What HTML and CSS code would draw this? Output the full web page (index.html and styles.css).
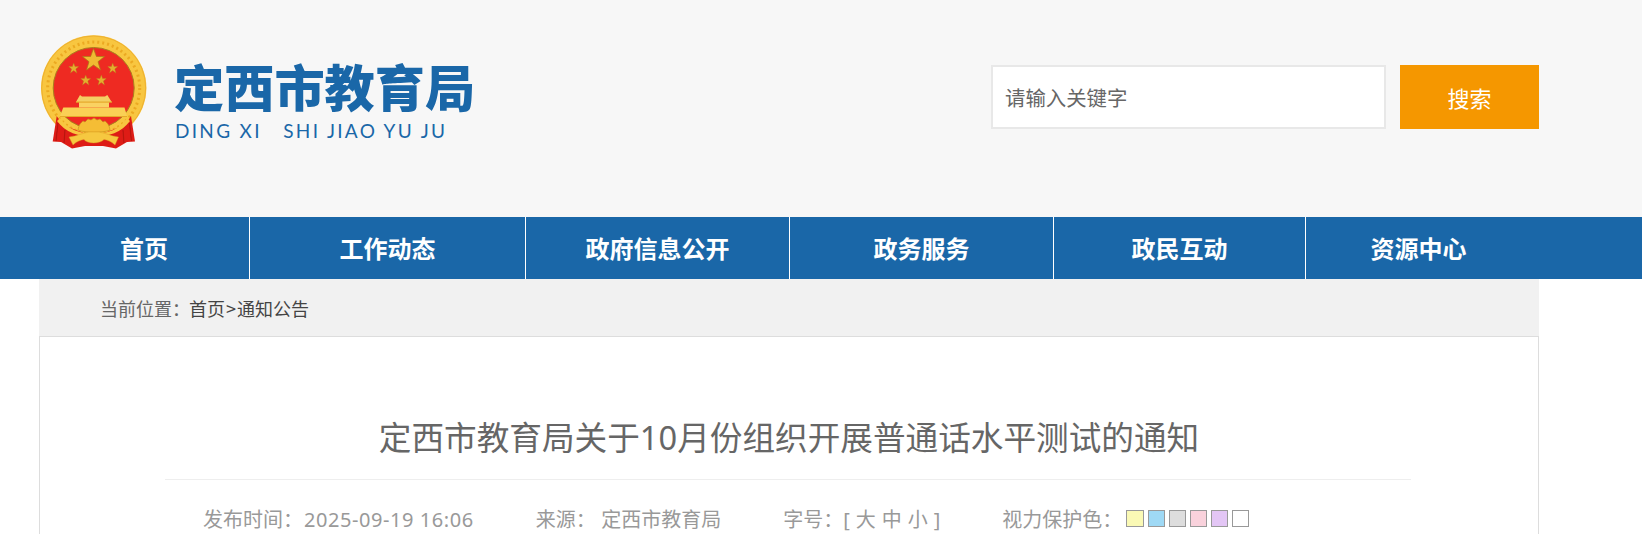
FILE: index.html
```html
<!DOCTYPE html>
<html lang="zh-CN">
<head>
<meta charset="utf-8">
<title>定西市教育局</title>
<link rel="stylesheet" href="styles.css">
</head>
<body>
<header class="header">
  <div class="header-inner">
    <div class="brand">
      <svg class="emblem" width="110" height="118" viewBox="0 0 110 118" aria-hidden="true">
        <defs><filter id="soft" x="-5%" y="-5%" width="110%" height="110%"><feGaussianBlur stdDeviation=".35"/></filter></defs>
        <g filter="url(#soft)">
          <circle cx="54.700" cy="55" r="52.700" fill="#f8c63f"/>
          <circle cx="54.700" cy="55" r="52" fill="none" stroke="#eeb030" stroke-width="1"/>
          <circle cx="54.700" cy="55" r="46" fill="none" stroke="#eba922" stroke-width="3" stroke-dasharray="2 3"/>
          <circle cx="54.700" cy="55" r="40.500" fill="#ee2c22" stroke="#a97f1e" stroke-width="1"/>
          <path d="M17.700 83 L13.700 108.500 L22 109 L33 115.500 L46 113 H64 L77 115.500 L88 109 L96 108.500 L92 83 L86 92 L55 104 L24 92 Z" fill="#de1f16"/>
          <path d="M19 90 L17 108 M26 97 L25 110 M90.500 90 L92.500 108 M84 97 L85 110" stroke="#b81510" stroke-width="1.200" fill="none"/>
          <path d="M54.500 15.500 L57.400 23.500 L65.500 23.500 L59 28.700 L61.500 37 L54.500 32 L47.500 37 L50 28.700 L43.500 23.500 L51.600 23.500 Z" fill="#f0bb33" stroke="#a97a18" stroke-width=".7"/>
          <path d="M34.700 30 L36 33.600 L39.800 33.600 L36.800 36 L37.900 40 L34.700 37.600 L31.500 40 L32.600 36 L29.600 33.600 L33.400 33.600 Z" fill="#e4ae2f" stroke="#a97a18" stroke-width=".3"/>
          <path d="M73.700 30 L75 33.600 L78.800 33.600 L75.800 36 L76.900 40 L73.700 37.600 L70.500 40 L71.600 36 L68.600 33.600 L72.400 33.600 Z" fill="#e4ae2f" stroke="#a97a18" stroke-width=".3"/>
          <path d="M46.700 42 L48 45.600 L51.800 45.600 L48.800 48 L49.900 52 L46.700 49.600 L43.500 52 L44.600 48 L41.600 45.600 L45.400 45.600 Z" fill="#e4ae2f" stroke="#a97a18" stroke-width=".3"/>
          <path d="M62.300 42 L63.600 45.600 L67.400 45.600 L64.400 48 L65.500 52 L62.300 49.600 L59.100 52 L60.200 48 L57.200 45.600 L61 45.600 Z" fill="#e4ae2f" stroke="#a97a18" stroke-width=".3"/>
          <path d="M41 62 L43 63.500 H66 L68.300 62 L72.700 69 H37 Z" fill="#f4cf63"/>
          <rect x="40" y="69" width="30" height="5.500" fill="#fad262"/>
          <rect x="37" y="68.500" width="36" height="1.200" fill="#e5a92c"/>
          <path d="M24.300 74.500 H85.500 L88 83 H21 Z" fill="#fad054"/>
          <path d="M21 83 H88 V84 H21 Z" fill="#e5a92c"/>
          <path d="M21 85 C28 96 42 101 54.700 101 C68 101 81 96 88 85 L91 88 C83 99 69 104 54.700 104 C40 104 26 99 18 88 Z" fill="#f8c63f"/>
          <path d="M39 97 C40 91 42 90 44 88 L46 89 L49 86 L52 87 L55 85 L58 87 L61 86 L64 89 L66 88 C68 90 70 91 71 97 C64 100 46 100 39 97 Z" fill="#f5bd34" stroke="#c48d1c" stroke-width=".6"/>
          <path d="M30 104 C38 103 44 100 50 99 H60 C66 100 72 103 79.500 104 L76 112 C72 108 68 107 65 106.500 C61 111 48 111 45 106.500 C42 107 38 108 34 112 Z" fill="#f6c840" stroke="#d89b22" stroke-width=".4"/>
        </g>
      </svg>
      <div class="brand-text">
        <div class="brand-name">定西市教育局</div>
        <div class="brand-pinyin">DING XI&nbsp;&nbsp; SHI JIAO YU JU</div>
      </div>
    </div>
    <form class="search">
      <input class="search-input" type="text" placeholder="请输入关键字">
      <button class="search-btn" type="button">搜索</button>
    </form>
  </div>
</header>
<nav class="nav">
  <ul class="nav-list">
    <li class="nav-item">首页</li>
    <li class="nav-item">工作动态</li>
    <li class="nav-item">政府信息公开</li>
    <li class="nav-item">政务服务</li>
    <li class="nav-item">政民互动</li>
    <li class="nav-item">资源中心</li>
  </ul>
</nav>
<main class="main">
  <div class="crumb"><span class="crumb-label">当前位置：</span>首页<span class="crumb-sep">&gt;</span>通知公告</div>
  <article class="article">
    <h1 class="article-title">定西市教育局关于10月份组织开展普通话水平测试的通知</h1>
    <div class="meta">
      <span class="meta-item">发布时间：<span class="meta-date">2025-09-19 16:06</span></span>
      <span class="meta-item meta-source"><span>来源：</span><span>定西市教育局</span></span>
      <span class="meta-item meta-size">字号：[ 大 中 小 ]</span>
      <span class="meta-item">视力保护色：
        <span class="swatches">
          <i class="swatch sw-yellow"></i><i class="swatch sw-blue"></i><i class="swatch sw-gray"></i><i class="swatch sw-pink"></i><i class="swatch sw-purple"></i><i class="swatch sw-white"></i>
        </span>
      </span>
    </div>
  </article>
</main>
</body>
</html>
```
FILE: styles.css
```css
* { box-sizing: border-box; }
html, body { margin: 0; padding: 0; height: 534px; overflow: hidden; background: #fff; }
body { font-family: "Noto Sans", "Noto Sans CJK SC", sans-serif; color: #666; }

.header { height: 217px; background: #f7f7f7; }
.header-inner { width: 1500px; margin-left: 39px; display: flex; justify-content: space-between; }
.brand { display: flex; padding-top: 33px; }
.emblem { display: block; flex: none; }
.brand-text { margin-left: 25px; padding-top: 20px; }
.brand-name { font-size: 50.200px; line-height: 64px; font-weight: 900; color: #1a67a8; font-family: "Noto Sans CJK SC", sans-serif; white-space: nowrap; }
.brand-pinyin { font-family: Lato, sans-serif; font-size: 19px; line-height: 24px; letter-spacing: 2.300px; color: #1a67a8; margin: 2px 0 0 1px; white-space: nowrap; }

.search { display: flex; gap: 14px; padding-top: 65px; }
.search-input { width: 395px; height: 64px; border: 2px solid #e8e8e8; background: #fff; padding: 0 12px; font: 20.400px "Noto Sans CJK SC", sans-serif; color: #666; outline: none; }
.search-input::placeholder { color: #666; opacity: 1; }
.search-btn { width: 139px; height: 64px; border: 0; background: #f59700; color: #fff; font: 22px "Noto Sans CJK SC", sans-serif; padding: 0; }

.nav { height: 62px; background: #1a67a8; }
.nav-list { list-style: none; margin: 0 0 0 39px; padding: 0; height: 62px; display: grid; grid-template-columns: 211px 276px 264px 264px 252px 225px; }
.nav-item { display: flex; align-items: center; justify-content: center; padding-bottom: 2px; color: #fff; font: 700 24px "Noto Sans CJK SC", sans-serif; border-right: 1px solid #fff; }
.nav-item:last-child { border-right: 0; }

.main { width: 1500px; margin-left: 39px; }
.crumb { height: 57px; background: #f1f1f1; padding-left: 61px; display: flex; align-items: center; font: 18px "Noto Sans CJK SC", sans-serif; color: #444; }
.crumb-label { color: #666; margin-right: -1px; }
.crumb-sep { margin: 0 1px; }

.article { border: 1px solid #ddd; height: 300px; }
.article-title { margin: 0; padding-top: 77px; height: 142px; text-align: center; font-weight: 400; font-size: 32.640px; line-height: 48px; color: #666; }
.meta { width: 1246px; margin-left: 125px; border-top: 1px solid #eee; padding: 25px 0 0 38px; display: flex; gap: 62px; font-size: 20px; line-height: 30px; color: #999; }
.meta-item { white-space: nowrap; display: flex; align-items: center; }
.meta-date { letter-spacing: 0.560px; margin-left: 1px; }
.meta-source { gap: 5.500px; }
.meta-size { word-spacing: 0.800px; }
.swatches { display: flex; gap: 4px; margin: -3px 0 0 4px; }
.swatch { display: block; width: 17.200px; height: 17px; border: 1px solid #999; }
.sw-yellow { background: #faf9b5; }
.sw-blue { background: #9fd9f5; }
.sw-gray { background: #ddd; }
.sw-pink { background: #f9d2dc; }
.sw-purple { background: #e3c6f5; }
.sw-white { background: #fff; }
```
